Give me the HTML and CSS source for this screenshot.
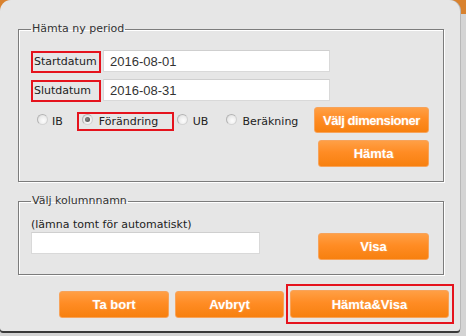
FILE: index.html
```html
<!DOCTYPE html>
<html lang="sv">
<head>
<meta charset="utf-8">
<title>Hämta ny period</title>
<link rel="stylesheet" href="styles.css">
</head>
<body>
<div class="dialog">
  <fieldset class="group g1">
    <legend>Hämta ny period</legend>
    <div class="row">
      <label class="lbl hl">Startdatum</label><input class="txt date" value="2016-08-01" readonly>
    </div>
    <div class="row r2">
      <label class="lbl hl">Slutdatum</label><input class="txt date" value="2016-08-31" readonly>
    </div>
    <div class="row r3">
      <div class="radios">
        <span class="opt o-ib"><span class="radio"></span>IB</span>
        <span class="opt o-fo hl"><span class="radio on"></span>Förändring</span>
        <span class="opt o-ub"><span class="radio"></span>UB</span>
        <span class="opt o-be"><span class="radio"></span>Beräkning</span>
      </div>
      <button class="btn b-dim">Välj dimensioner</button>
    </div>
    <div class="row r4"><button class="btn b-side">Hämta</button></div>
  </fieldset>

  <fieldset class="group g2">
    <legend>Välj kolumnnamn</legend>
    <div class="colrow">
      <div class="colleft">
        <div class="hint">(lämna tomt för automatiskt)</div>
        <input class="txt col" value="" readonly>
      </div>
      <button class="btn b-side">Visa</button>
    </div>
  </fieldset>

  <div class="actions">
    <button class="btn b-act">Ta bort</button>
    <button class="btn b-act b-avb">Avbryt</button>
    <div class="hlbox hl"><button class="btn b-main">Hämta&amp;Visa</button></div>
  </div>
</div>
</body>
</html>
```

FILE: styles.css
```css
html, body {
  margin: 0;
  padding: 0;
}
body {
  width: 466px;
  height: 336px;
  overflow: hidden;
  background: linear-gradient(to bottom, #d9822e 0, #d9822e 14px, #d4d4d4 14px);
  font-family: "DejaVu Sans", Verdana, sans-serif;
  font-size: 11px;
  color: #222;
}
.dialog {
  box-sizing: border-box;
  width: 460px;
  height: 331px;
  background: #e6e6e6;
  border-radius: 11px 11px 3px 3px;
  box-shadow: 0 2px 0 #3a3a3a, 1px 0 0 #b8b8b8;
  padding-top: 22px;
}
.group {
  box-sizing: border-box;
  width: 426px;
  margin: 0 0 0 18px;
  border: 1px solid #7c7c7c;
  box-shadow: inset 1px 1px 0 #fff, 1px 1px 0 #fff;
  padding: 14px 13px 14px 12px;
  min-width: 0;
}
.group legend {
  padding: 0 1px;
  margin-left: 0;
  font-size: 11px;
  line-height: 14px;
  color: #333;
}
.hl {
  border: 2px solid #e5131d;
}
.row {
  display: flex;
  align-items: center;
}
.lbl {
  box-sizing: border-box;
  width: 70px;
  height: 22px;
  line-height: 18px;
  padding-left: 1px;
  margin-top: 1px;
  color: #222;
  white-space: nowrap;
}
.txt {
  box-sizing: border-box;
  height: 22px;
  background: #fff;
  border: 1px solid #d9d9d9;
  border-top-color: #cfcfcf;
  outline: none;
  font-family: "Liberation Sans", Arial, sans-serif;
  font-size: 13px;
  color: #333;
  padding: 0 6px;
  margin: 0;
}
.date {
  width: 227px;
  margin-left: 2px;
  align-self: flex-start;
}
.r2 { margin-top: 6px; }
.r3 {
  margin-top: 5px;
  justify-content: space-between;
}
.r4 {
  margin-top: 7px;
  justify-content: flex-end;
}
.radios {
  display: flex;
  align-items: center;
  padding-top: 3px;
}
.opt {
  display: inline-flex;
  align-items: center;
  height: 15px;
  line-height: 15px;
  color: #222;
  white-space: nowrap;
}
.radio {
  box-sizing: border-box;
  display: inline-block;
  width: 11px;
  height: 11px;
  border-radius: 50%;
  border: 1px solid #b4b4b4;
  border-right-color: #d0d0d0;
  border-bottom-color: #d6d6d6;
  background: radial-gradient(circle at 60% 65%, #fdfdfd 0, #ececec 55%, #d6d6d6 100%);
  margin-right: 4px;
  position: relative;
  top: -2px;
}
.radio.on::after {
  content: "";
  position: absolute;
  left: 2px;
  top: 2px;
  width: 5px;
  height: 5px;
  border-radius: 50%;
  background: radial-gradient(circle at 40% 40%, #888 0, #444 100%);
}
.o-ib { margin-left: 6px; }
.o-fo {
  box-sizing: border-box;
  height: 19px;
  margin-left: 14px;
  padding: 0 3px 0 3px;
  width: 97px;
}
.o-fo .radio { margin-right: 6px; }
.o-ub { margin-left: 3px; }
.o-ub .radio { margin-right: 5px; }
.o-be { margin-left: 18px; }
.o-be .radio { margin-right: 5px; }

.btn {
  box-sizing: border-box;
  border: 1px solid #f7a35a;
  border-radius: 3px;
  background: linear-gradient(to bottom, #ff9f45 0, #ff8c24 45%, #f7800f 100%);
  color: #fff;
  font-family: "Liberation Sans", Arial, sans-serif;
  font-weight: bold;
  font-size: 13px;
  text-shadow: 0 0 2px rgba(255, 210, 170, 0.6);
  padding: 0;
  margin: 0;
  height: 27px;
  cursor: pointer;
}
.b-dim {
  width: 115px;
  height: 26px;
  letter-spacing: -0.45px;
  margin-right: 1px;
}
.b-side {
  width: 111px;
  margin-right: 1px;
}
.g2 {
  margin-top: 12px;
  padding-top: 10px;
}
.colrow {
  display: flex;
  align-items: flex-end;
  justify-content: space-between;
}
.colleft {
  display: flex;
  flex-direction: column;
  padding-bottom: 6px;
}
.hint {
  line-height: 13px;
  color: #222;
}
.col {
  width: 229px;
  margin-top: 1px;
}
.actions {
  display: flex;
  align-items: center;
  margin: 9px 0 0 59px;
}
.b-act {
  width: 110px;
}
.b-avb {
  margin-left: 6px;
  width: 109px;
}
.hlbox {
  margin-left: 2px;
  padding: 4px 3px 4px 2px;
}
.b-main {
  width: 159px;
  height: 28px;
  display: block;
}
```
